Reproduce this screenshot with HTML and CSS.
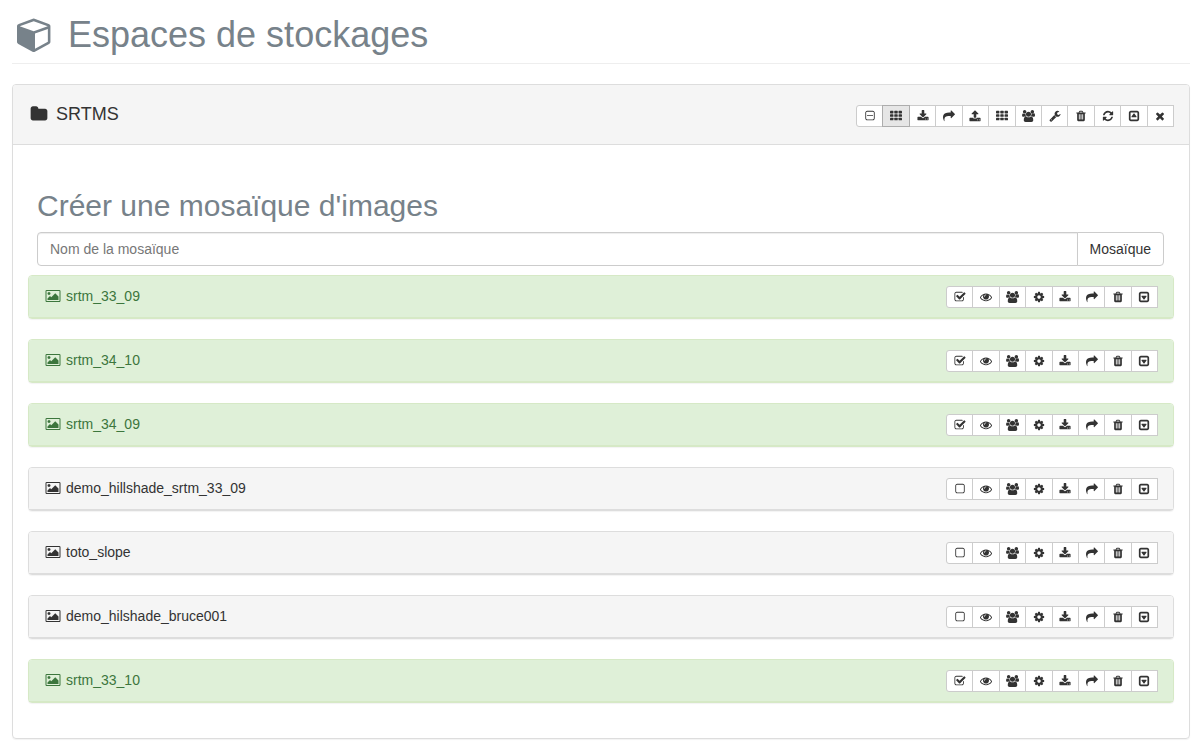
FILE: index.html
```html
<!DOCTYPE html>
<html lang="fr">
<head>
<meta charset="utf-8">
<meta name="viewport" content="width=device-width, initial-scale=1">
<title>Espaces de stockages</title>
<link rel="stylesheet" href="styles.css">
</head>
<body>
<svg class="sprite" aria-hidden="true">
<symbol id="cube" viewBox="0 0 1792 1792"><path d="M896 1629l640-349v-636l-640 233v752zm-64-865l698-254-698-254-698 254zm832-252v768q0 35-18 65t-49 47l-704 384q-28 16-61 16t-61-16l-704-384q-31-17-49-47t-18-65v-768q0-40 23-73t61-47l704-256q22-8 44-8t44 8l704 256q38 14 61 47t23 73z"/></symbol>
<symbol id="folder" viewBox="0 0 1792 1792"><path d="M1728 608v704q0 92-66 158t-158 66h-1216q-92 0-158-66t-66-158v-960q0-92 66-158t158-66h320q92 0 158 66t66 158v32h672q92 0 158 66t66 158z"/></symbol>
<symbol id="minus" viewBox="0 0 1792 1792"><path d="M1344 800v64q0 14-9 23t-23 9h-832q-14 0-23-9t-9-23v-64q0-14 9-23t23-9h832q14 0 23 9t9 23zm128 448v-832q0-66-47-113t-113-47h-832q-66 0-113 47t-47 113v832q0 66 47 113t113 47h832q66 0 113-47t47-113zm128-832v832q0 119-84.500 203.500t-203.500 84.500h-832q-119 0-203.500-84.500t-84.500-203.500v-832q0-119 84.500-203.500t203.500-84.500h832q119 0 203.500 84.500t84.500 203.500z"/></symbol>
<symbol id="grid" viewBox="0 0 1792 1792"><g id="grid-row"><rect y="128" width="512" height="384" rx="96"/><rect x="640" y="128" width="512" height="384" rx="96"/><rect x="1280" y="128" width="512" height="384" rx="96"/></g><use href="#grid-row" y="512"/><use href="#grid-row" y="1024"/></symbol>
<symbol id="download" viewBox="0 0 1792 1792"><path d="M1344 1344q0-26-19-45t-45-19-45 19-19 45 19 45 45 19 45-19 19-45zm256 0q0-26-19-45t-45-19-45 19-19 45 19 45 45 19 45-19 19-45zm128-224v320q0 40-28 68t-68 28h-1472q-40 0-68-28t-28-68v-320q0-40 28-68t68-28h465l135 136q58 56 136 56t136-56l136-136h464q40 0 68 28t28 68zm-325-569q17 41-14 70l-448 448q-18 19-45 19t-45-19l-448-448q-31-29-14-70 17-39 59-39h256v-448q0-26 19-45t45-19h256q26 0 45 19t19 45v448h256q42 0 59 39z"/></symbol>
<symbol id="upload" viewBox="0 0 1792 1792"><path d="M1344 1472q0-26-19-45t-45-19-45 19-19 45 19 45 45 19 45-19 19-45zm256 0q0-26-19-45t-45-19-45 19-19 45 19 45 45 19 45-19 19-45zm128-224v320q0 40-28 68t-68 28h-1472q-40 0-68-28t-28-68v-320q0-40 28-68t68-28h427q21 56 70.500 92t110.500 36h256q61 0 110.500-36t70.500-92h427q40 0 68 28t28 68zm-325-648q-17 40-59 40h-256v448q0 26-19 45t-45 19h-256q-26 0-45-19t-19-45v-448h-256q-42 0-59-40-17-39 14-69l448-448q18-19 45-19t45 19l448 448q31 30 14 69z"/></symbol>
<symbol id="share" viewBox="0 0 1792 1792"><path d="M1792 640q0 26-19 45l-512 512q-19 19-45 19t-45-19-19-45v-256h-224q-98 0-175.500 6t-154 21.500-133 42.500-105.500 69.500-80 101-48.500 138.500-17.500 181q0 55 5 123 0 6 2.500 23.500t2.500 26.500q0 15-8.500 25t-23.500 10q-16 0-28-17-7-9-13-22t-13.500-30-10.500-24q-127-285-127-451 0-199 53-333 162-403 875-403h224v-256q0-26 19-45t45-19 45 19l512 512q19 19 19 45z"/></symbol>
<symbol id="users" viewBox="0 0 1920 1792"><path d="M593 896q-162 5-265 128h-134q-82 0-138-40.500t-56-118.500q0-353 124-353 6 0 43.500 21t97.500 42.500 119 21.500q67 0 133-23-5 37-5 66 0 159 93 298zm1071 637q0 120-73 189.500t-194 69.500h-874q-121 0-194-69.500t-73-189.500q0-53 3.500-103.500t14-109 26.500-108.500 43-97.500 62-81 85.500-53.500 111.500-20q10 0 43 21.500t73 48 107 48 135 21.500 135-21.500 107-48 73-48 43-21.500q61 0 111.500 20t85.500 53.500 62 81 43 97.500 26.500 108.500 14 109 3.500 103.500zm-1024-1277q0 106-75 181t-181 75-181-75-75-181 75-181 181-75 181 75 75 181zm704 384q0 159-112.500 271.500t-271.500 112.500-271.500-112.500-112.500-271.500 112.500-271.500 271.500-112.500 271.500 112.500 112.500 271.500zm576 225q0 78-56 118.500t-138 40.500h-134q-103-123-265-128 93-139 93-298 0-29-5-66 66 23 133 23 59 0 119-21.500t97.500-42.500 43.500-21q124 0 124 353zm-128-609q0 106-75 181t-181 75-181-75-75-181 75-181 181-75 181 75 75 181z"/></symbol>
<symbol id="wrench" viewBox="0 0 1792 1792"><path d="M448 1472q0-26-19-45t-45-19-45 19-19 45 19 45 45 19 45-19 19-45zm644-420l-682 682q-37 37-90 37-52 0-91-37l-106-108q-38-36-38-90 0-53 38-91l681-681q39 98 114.500 173.500t173.500 114.500zm634-435q0 39-23 106-47 134-164.500 217.500t-258.500 83.500q-185 0-316.500-131.500t-131.500-316.500 131.500-316.500 316.500-131.500q58 0 121.500 16.500t107.500 46.500q16 11 16 28t-16 28l-293 169v224l193 107q5-3 79-48.500t135.500-81 70.500-35.500q15 0 23.500 10t8.500 25z"/></symbol>
<symbol id="trash" viewBox="0 0 1792 1792"><path d="M704 1376v-704q0-14-9-23t-23-9h-64q-14 0-23 9t-9 23v704q0 14 9 23t23 9h64q14 0 23-9t9-23zm256 0v-704q0-14-9-23t-23-9h-64q-14 0-23 9t-9 23v704q0 14 9 23t23 9h64q14 0 23-9t9-23zm256 0v-704q0-14-9-23t-23-9h-64q-14 0-23 9t-9 23v704q0 14 9 23t23 9h64q14 0 23-9t9-23zm-544-992h448l-48-117q-7-9-17-11h-317q-10 2-17 11zm928 32v64q0 14-9 23t-23 9h-96v948q0 83-47 143.500t-113 60.500h-832q-66 0-113-58.500t-47-141.500v-952h-96q-14 0-23-9t-9-23v-64q0-14 9-23t23-9h309l70-167q15-37 54-63t79-26h320q40 0 79 26t54 63l70 167h309q14 0 23 9t9 23z"/></symbol>
<symbol id="refresh" viewBox="0 0 1792 1792"><path d="M1639 1056q0 5-1 7-64 268-268 434.500t-478 166.500q-146 0-282.500-55t-243.500-157l-129 129q-19 19-45 19t-45-19-19-45v-448q0-26 19-45t45-19h448q26 0 45 19t19 45-19 45l-137 137q71 66 161 102t187 36q134 0 250-65t186-179q11-17 53-117 8-23 30-23h192q13 0 22.500 9.500t9.500 22.500zm25-800v448q0 26-19 45t-45 19h-448q-26 0-45-19t-19-45 19-45l138-138q-148-137-349-137-134 0-250 65t-186 179q-11 17-53 117-8 23-30 23h-199q-13 0-22.500-9.500t-9.500-22.500v-7q65-268 270-434.500t480-166.500q146 0 284 55.500t245 156.500l130-129q19-19 45-19t45 19 19 45z"/></symbol>
<symbol id="close" viewBox="0 0 1792 1792"><path d="M1490 1322q0 40-28 68l-136 136q-28 28-68 28t-68-28l-294-294-294 294q-28 28-68 28t-68-28l-136-136q-28-28-28-68t28-68l294-294-294-294q-28-28-28-68t28-68l136-136q28-28 68-28t68 28l294 294 294-294q28-28 68-28t68 28l136 136q28 28 28 68t-28 68l-294 294 294 294q28 28 28 68z"/></symbol>
<symbol id="down" viewBox="0 0 1792 1792"><path d="M1273 739q18 35-5 66l-320 448q-19 27-52 27t-52-27l-320-448q-23-31-5-66 17-35 57-35h640q40 0 57 35zm135 637v-960q0-14-9-23t-23-9h-960q-14 0-23 9t-9 23v960q0 14 9 23t23 9h960q14 0 23-9t9-23zm256-960v960q0 119-84.500 203.500t-203.500 84.500h-960q-119 0-203.500-84.500t-84.500-203.500v-960q0-119 84.500-203.500t203.500-84.500h960q119 0 203.500 84.500t84.500 203.500z"/></symbol>
<symbol id="up" viewBox="0 0 1792 1792"><path d="M1273 1053q18-35-5-66l-320-448q-19-27-52-27t-52 27l-320 448q-23 31-5 66 17 35 57 35h640q40 0 57-35zm135 323v-960q0-14-9-23t-23-9h-960q-14 0-23 9t-9 23v960q0 14 9 23t23 9h960q14 0 23-9t9-23zm256-960v960q0 119-84.500 203.500t-203.500 84.500h-960q-119 0-203.500-84.500t-84.500-203.500v-960q0-119 84.500-203.500t203.500-84.500h960q119 0 203.500 84.500t84.500 203.500z"/></symbol>
<symbol id="checked" viewBox="0 0 1792 1792"><path d="M1472 930v318q0 119-84.500 203.500t-203.500 84.500h-832q-119 0-203.500-84.500t-84.500-203.500v-832q0-119 84.500-203.500t203.500-84.500h832q63 0 117 25 15 7 18 23 3 17-9 29l-49 49q-10 10-23 10-3 0-9-2-23-6-45-6h-832q-66 0-113 47t-47 113v832q0 66 47 113t113 47h832q66 0 113-47t47-113v-254q0-13 9-22l64-64q10-10 23-10 6 0 12 3 20 8 20 29zm231-489l-814 814q-24 24-57 24t-57-24l-430-430q-24-24-24-57t24-57l110-110q24-24 57-24t57 24l263 263 647-647q24-24 57-24t57 24l110 110q24 24 24 57t-24 57z"/></symbol>
<symbol id="unchecked" viewBox="0 0 1792 1792"><path d="M1312 256h-832q-66 0-113 47t-47 113v832q0 66 47 113t113 47h832q66 0 113-47t47-113v-832q0-66-47-113t-113-47zm288 160v832q0 119-84.500 203.500t-203.500 84.500h-832q-119 0-203.500-84.500t-84.500-203.500v-832q0-119 84.500-203.500t203.500-84.500h832q119 0 203.500 84.500t84.500 203.500z"/></symbol>
<symbol id="eye" viewBox="0 0 1792 1792"><path d="M1664 960q-152-236-381-353 61 104 61 225 0 185-131.500 316.500t-316.500 131.500-316.500-131.500-131.500-316.500q0-121 61-225-229 117-381 353 133 205 333.500 326.500t434.500 121.500 434.500-121.500 333.500-326.500zm-720-384q0-20-14-34t-34-14q-125 0-214.500 89.500t-89.500 214.500q0 20 14 34t34 14 34-14 14-34q0-86 61-147t147-61q20 0 34-14t14-34zm848 384q0 34-20 69-140 230-376.500 368.500t-499.500 138.500-499.500-139-376.500-368q-20-35-20-69t20-69q140-229 376.500-368t499.500-139 499.500 139 376.500 368q20 35 20 69z"/></symbol>
<symbol id="gear" viewBox="0 0 1792 1792"><path d="M1152 896q0-106-75-181t-181-75-181 75-75 181 75 181 181 75 181-75 75-181zm512-109v222q0 12-8 23t-20 13l-185 28q-19 54-39 91 35 50 107 138 10 12 10 25t-9 23q-27 37-99 108t-94 71q-12 0-26-9l-138-108q-44 23-91 38-16 136-29 186-7 28-36 28h-222q-14 0-24.500-8.500t-11.500-21.500l-28-184q-49-16-90-37l-141 107q-10 9-25 9-14 0-25-11-126-114-165-168-7-10-7-23 0-12 8-23 15-21 51-66.500t54-70.500q-27-50-41-99l-183-27q-13-2-21-12.500t-8-23.500v-222q0-12 8-23t19-13l186-28q14-46 39-92-40-57-107-138-10-12-10-24 0-10 9-23 26-36 98.500-107.500t94.500-71.500q13 0 26 10l138 107q44-23 91-38 16-136 29-186 7-28 36-28h222q14 0 24.500 8.500t11.500 21.500l28 184q49 16 90 37l142-107q9-9 24-9 13 0 25 10 129 119 165 170 7 8 7 22 0 12-8 23-15 21-51 66.500t-54 70.500q26 50 41 98l183 28q13 2 21 12.500t8 23.500z"/></symbol>
<symbol id="image" viewBox="0 0 1920 1792"><path d="M640 576q0 80-56 136t-136 56-136-56-56-136 56-136 136-56 136 56 56 136zm1024 384v448h-1408v-192l320-320 160 160 512-512zm96-704h-1600q-13 0-22.500 9.500t-9.500 22.500v1216q0 13 9.500 22.500t22.500 9.500h1600q13 0 22.500-9.500t9.500-22.500v-1216q0-13-9.500-22.500t-22.500-9.500zm160 32v1216q0 66-47 113t-113 47h-1600q-66 0-113-47t-47-113v-1216q0-66 47-113t113-47h1600q66 0 113 47t47 113z"/></symbol>
</svg>

<header class="page-header">
  <svg class="icon icon-cube" aria-hidden="true"><use href="#cube"/></svg>
  <h1 class="page-title">Espaces de stockages</h1>
</header>

<main class="storage">
  <div class="storage-heading">
    <h2 class="storage-name"><svg class="icon icon-folder" aria-hidden="true"><use href="#folder"/></svg>SRTMS</h2>
    <div class="toolbar toolbar-wide">
      <button class="btn" type="button" aria-label="Tout désélectionner"><svg class="icon"><use href="#minus"/></svg></button>
      <button class="btn active" type="button" aria-pressed="true" aria-label="Mosaïque"><svg class="icon"><use href="#grid"/></svg></button>
      <button class="btn" type="button" aria-label="Télécharger"><svg class="icon"><use href="#download"/></svg></button>
      <button class="btn" type="button" aria-label="Partager"><svg class="icon"><use href="#share"/></svg></button>
      <button class="btn" type="button" aria-label="Envoyer"><svg class="icon"><use href="#upload"/></svg></button>
      <button class="btn" type="button" aria-label="Grille"><svg class="icon"><use href="#grid"/></svg></button>
      <button class="btn" type="button" aria-label="Utilisateurs"><svg class="icon icon-wide"><use href="#users"/></svg></button>
      <button class="btn" type="button" aria-label="Outils"><svg class="icon"><use href="#wrench"/></svg></button>
      <button class="btn" type="button" aria-label="Supprimer"><svg class="icon"><use href="#trash"/></svg></button>
      <button class="btn" type="button" aria-label="Actualiser"><svg class="icon"><use href="#refresh"/></svg></button>
      <button class="btn" type="button" aria-label="Replier"><svg class="icon"><use href="#up"/></svg></button>
      <button class="btn" type="button" aria-label="Fermer"><svg class="icon"><use href="#close"/></svg></button>
    </div>
  </div>

  <div class="storage-body">
    <form class="mosaic-form">
      <h2 class="mosaic-title"><label for="mosaic-name">Créer une mosaïque d'images</label></h2>
      <div class="input-group">
        <input class="text-input" id="mosaic-name" type="text" placeholder="Nom de la mosaïque">
        <button class="submit" type="button">Mosaïque</button>
      </div>
    </form>

    <ul class="files">
      <li class="file selected"><div class="file-heading">
        <span class="file-name"><svg class="icon icon-image" aria-hidden="true"><use href="#image"/></svg>srtm_33_09</span>
        <div class="toolbar">
          <button class="btn" type="button" aria-pressed="true" aria-label="Sélectionner"><svg class="icon"><use href="#checked"/></svg></button>
          <button class="btn" type="button" aria-label="Voir"><svg class="icon"><use href="#eye"/></svg></button>
          <button class="btn" type="button" aria-label="Utilisateurs"><svg class="icon icon-wide"><use href="#users"/></svg></button>
          <button class="btn" type="button" aria-label="Réglages"><svg class="icon"><use href="#gear"/></svg></button>
          <button class="btn" type="button" aria-label="Télécharger"><svg class="icon"><use href="#download"/></svg></button>
          <button class="btn" type="button" aria-label="Partager"><svg class="icon"><use href="#share"/></svg></button>
          <button class="btn" type="button" aria-label="Supprimer"><svg class="icon"><use href="#trash"/></svg></button>
          <button class="btn" type="button" aria-label="Déplier"><svg class="icon"><use href="#down"/></svg></button>
        </div>
      </div></li>
      <li class="file selected"><div class="file-heading">
        <span class="file-name"><svg class="icon icon-image" aria-hidden="true"><use href="#image"/></svg>srtm_34_10</span>
        <div class="toolbar">
          <button class="btn" type="button" aria-pressed="true" aria-label="Sélectionner"><svg class="icon"><use href="#checked"/></svg></button>
          <button class="btn" type="button" aria-label="Voir"><svg class="icon"><use href="#eye"/></svg></button>
          <button class="btn" type="button" aria-label="Utilisateurs"><svg class="icon icon-wide"><use href="#users"/></svg></button>
          <button class="btn" type="button" aria-label="Réglages"><svg class="icon"><use href="#gear"/></svg></button>
          <button class="btn" type="button" aria-label="Télécharger"><svg class="icon"><use href="#download"/></svg></button>
          <button class="btn" type="button" aria-label="Partager"><svg class="icon"><use href="#share"/></svg></button>
          <button class="btn" type="button" aria-label="Supprimer"><svg class="icon"><use href="#trash"/></svg></button>
          <button class="btn" type="button" aria-label="Déplier"><svg class="icon"><use href="#down"/></svg></button>
        </div>
      </div></li>
      <li class="file selected"><div class="file-heading">
        <span class="file-name"><svg class="icon icon-image" aria-hidden="true"><use href="#image"/></svg>srtm_34_09</span>
        <div class="toolbar">
          <button class="btn" type="button" aria-pressed="true" aria-label="Sélectionner"><svg class="icon"><use href="#checked"/></svg></button>
          <button class="btn" type="button" aria-label="Voir"><svg class="icon"><use href="#eye"/></svg></button>
          <button class="btn" type="button" aria-label="Utilisateurs"><svg class="icon icon-wide"><use href="#users"/></svg></button>
          <button class="btn" type="button" aria-label="Réglages"><svg class="icon"><use href="#gear"/></svg></button>
          <button class="btn" type="button" aria-label="Télécharger"><svg class="icon"><use href="#download"/></svg></button>
          <button class="btn" type="button" aria-label="Partager"><svg class="icon"><use href="#share"/></svg></button>
          <button class="btn" type="button" aria-label="Supprimer"><svg class="icon"><use href="#trash"/></svg></button>
          <button class="btn" type="button" aria-label="Déplier"><svg class="icon"><use href="#down"/></svg></button>
        </div>
      </div></li>
      <li class="file"><div class="file-heading">
        <span class="file-name"><svg class="icon icon-image" aria-hidden="true"><use href="#image"/></svg>demo_hillshade_srtm_33_09</span>
        <div class="toolbar">
          <button class="btn" type="button" aria-pressed="false" aria-label="Sélectionner"><svg class="icon"><use href="#unchecked"/></svg></button>
          <button class="btn" type="button" aria-label="Voir"><svg class="icon"><use href="#eye"/></svg></button>
          <button class="btn" type="button" aria-label="Utilisateurs"><svg class="icon icon-wide"><use href="#users"/></svg></button>
          <button class="btn" type="button" aria-label="Réglages"><svg class="icon"><use href="#gear"/></svg></button>
          <button class="btn" type="button" aria-label="Télécharger"><svg class="icon"><use href="#download"/></svg></button>
          <button class="btn" type="button" aria-label="Partager"><svg class="icon"><use href="#share"/></svg></button>
          <button class="btn" type="button" aria-label="Supprimer"><svg class="icon"><use href="#trash"/></svg></button>
          <button class="btn" type="button" aria-label="Déplier"><svg class="icon"><use href="#down"/></svg></button>
        </div>
      </div></li>
      <li class="file"><div class="file-heading">
        <span class="file-name"><svg class="icon icon-image" aria-hidden="true"><use href="#image"/></svg>toto_slope</span>
        <div class="toolbar">
          <button class="btn" type="button" aria-pressed="false" aria-label="Sélectionner"><svg class="icon"><use href="#unchecked"/></svg></button>
          <button class="btn" type="button" aria-label="Voir"><svg class="icon"><use href="#eye"/></svg></button>
          <button class="btn" type="button" aria-label="Utilisateurs"><svg class="icon icon-wide"><use href="#users"/></svg></button>
          <button class="btn" type="button" aria-label="Réglages"><svg class="icon"><use href="#gear"/></svg></button>
          <button class="btn" type="button" aria-label="Télécharger"><svg class="icon"><use href="#download"/></svg></button>
          <button class="btn" type="button" aria-label="Partager"><svg class="icon"><use href="#share"/></svg></button>
          <button class="btn" type="button" aria-label="Supprimer"><svg class="icon"><use href="#trash"/></svg></button>
          <button class="btn" type="button" aria-label="Déplier"><svg class="icon"><use href="#down"/></svg></button>
        </div>
      </div></li>
      <li class="file"><div class="file-heading">
        <span class="file-name"><svg class="icon icon-image" aria-hidden="true"><use href="#image"/></svg>demo_hilshade_bruce001</span>
        <div class="toolbar">
          <button class="btn" type="button" aria-pressed="false" aria-label="Sélectionner"><svg class="icon"><use href="#unchecked"/></svg></button>
          <button class="btn" type="button" aria-label="Voir"><svg class="icon"><use href="#eye"/></svg></button>
          <button class="btn" type="button" aria-label="Utilisateurs"><svg class="icon icon-wide"><use href="#users"/></svg></button>
          <button class="btn" type="button" aria-label="Réglages"><svg class="icon"><use href="#gear"/></svg></button>
          <button class="btn" type="button" aria-label="Télécharger"><svg class="icon"><use href="#download"/></svg></button>
          <button class="btn" type="button" aria-label="Partager"><svg class="icon"><use href="#share"/></svg></button>
          <button class="btn" type="button" aria-label="Supprimer"><svg class="icon"><use href="#trash"/></svg></button>
          <button class="btn" type="button" aria-label="Déplier"><svg class="icon"><use href="#down"/></svg></button>
        </div>
      </div></li>
      <li class="file selected"><div class="file-heading">
        <span class="file-name"><svg class="icon icon-image" aria-hidden="true"><use href="#image"/></svg>srtm_33_10</span>
        <div class="toolbar">
          <button class="btn" type="button" aria-pressed="true" aria-label="Sélectionner"><svg class="icon"><use href="#checked"/></svg></button>
          <button class="btn" type="button" aria-label="Voir"><svg class="icon"><use href="#eye"/></svg></button>
          <button class="btn" type="button" aria-label="Utilisateurs"><svg class="icon icon-wide"><use href="#users"/></svg></button>
          <button class="btn" type="button" aria-label="Réglages"><svg class="icon"><use href="#gear"/></svg></button>
          <button class="btn" type="button" aria-label="Télécharger"><svg class="icon"><use href="#download"/></svg></button>
          <button class="btn" type="button" aria-label="Partager"><svg class="icon"><use href="#share"/></svg></button>
          <button class="btn" type="button" aria-label="Supprimer"><svg class="icon"><use href="#trash"/></svg></button>
          <button class="btn" type="button" aria-label="Déplier"><svg class="icon"><use href="#down"/></svg></button>
        </div>
      </div></li>
    </ul>
  </div>
</main>
</body>
</html>
```

FILE: styles.css
```css
* { box-sizing: border-box; }

body {
  margin: 0;
  padding: 15px 12px 10px;
  background: #fff;
  color: #333;
  font: 14px/20px "Liberation Sans", Arial, sans-serif;
}

h1, h2 { margin: 0; font-weight: 400; }

.sprite { display: none; }

.icon {
  display: block;
  flex: none;
  width: 12px;
  height: 12px;
  fill: currentColor;
}
.icon-wide { width: 13px; }

.page-header {
  display: flex;
  align-items: flex-start;
  gap: 15px;
  padding: 0 5px 8px;
  margin-bottom: 20px;
  border-bottom: 1px solid #eee;
  color: #77828a;
}
.page-title { font-size: 36px; line-height: 40px; }
.icon-cube { width: 36px; height: 36px; margin-top: 1px; }

.storage {
  border: 1px solid #ddd;
  border-radius: 4px;
  box-shadow: 0 1px 1px rgba(0, 0, 0, .05);
}
.storage-heading {
  display: flex;
  justify-content: space-between;
  align-items: flex-start;
  padding: 20px 15px 17px;
  background: #f5f5f5;
  border-bottom: 1px solid #ddd;
  border-radius: 3px 3px 0 0;
}
.storage-name {
  display: flex;
  align-items: center;
  gap: 8px;
  padding-left: 2px;
  font-size: 18px;
  line-height: 18px;
}
.icon-folder { width: 18px; height: 18px; }
.storage-body { padding: 15px; }

.toolbar { display: flex; width: 212px; }
.toolbar-wide { width: 318px; }
.btn {
  display: flex;
  flex: 1;
  align-items: center;
  justify-content: center;
  height: 22px;
  padding: 0;
  background: #fff;
  border: 1px solid #ccc;
  color: #333;
}
.btn + .btn { margin-left: -1px; }
.btn:first-child { border-radius: 3px 0 0 3px; }
.btn.active {
  z-index: 1;
  background: #e6e6e6;
  border-color: #adadad;
}

.mosaic-form { padding: 29px 10px 9px 9px; }
.mosaic-title {
  margin-bottom: 10px;
  color: #77828a;
  font-size: 30px;
  line-height: 33px;
}
.input-group { display: flex; }
.text-input {
  flex: 1;
  min-width: 0;
  height: 34px;
  padding: 6px 12px;
  border: 1px solid #ccc;
  border-radius: 4px 0 0 4px;
  box-shadow: inset 0 1px 1px rgba(0, 0, 0, .075);
  color: #555;
  font: inherit;
}
.text-input::placeholder { color: #777; opacity: 1; }
.submit {
  height: 34px;
  margin-left: -1px;
  padding: 6px 12px;
  background: #fff;
  border: 1px solid #ccc;
  border-radius: 0 4px 4px 0;
  color: #333;
  font: inherit;
}

.files { margin: 0; padding: 0; list-style: none; }
.file {
  margin-bottom: 20px;
  background: #fff;
  border: 1px solid #ddd;
  border-radius: 4px;
  box-shadow: 0 1px 1px rgba(0, 0, 0, .05);
}
.file-heading {
  display: flex;
  justify-content: space-between;
  align-items: flex-start;
  padding: 10px 15px 9px;
  background: #f5f5f5;
  border-bottom: 1px solid #ddd;
  border-radius: 3px 3px 0 0;
}
.file-name {
  display: flex;
  align-items: center;
  gap: 5px;
  padding-left: 1px;
}
.icon-image { width: 16px; height: 14px; }
.selected, .selected .file-heading { border-color: #d6e9c6; }
.selected .file-heading { background: #dff0d8; color: #3c763d; }
```
